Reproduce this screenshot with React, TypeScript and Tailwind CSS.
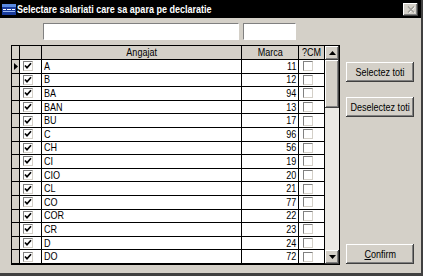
const font = "font-['Liberation_Sans',Arial,sans-serif]";

const rows: [string, number][] = [
  ["A", 11],
  ["B", 12],
  ["BA", 94],
  ["BAN", 13],
  ["BU", 17],
  ["C", 96],
  ["CH", 56],
  ["CI", 19],
  ["CIO", 20],
  ["CL", 21],
  ["CO", 77],
  ["COR", 22],
  ["CR", 23],
  ["D", 24],
  ["DO", 72],
];

// classic raised 3D edge
const raised =
  "bg-[#d4d0c8] shadow-[inset_-1px_-1px_#404040,inset_1px_1px_#ffffff,inset_-2px_-2px_#808080,inset_2px_2px_#d4d0c8]";

// the dialog font is tall and narrow: squeeze Liberation Sans horizontally
function N({ children, o = "c" }: { children: React.ReactNode; o?: "l" | "c" | "r" }) {
  const origin = o === "l" ? "origin-left" : o === "r" ? "origin-right" : "origin-center";
  return <span className={`inline-block whitespace-nowrap scale-x-[0.82] ${origin}`}>{children}</span>;
}

function Box({ checked }: { checked?: boolean }) {
  return (
    <div className="flex h-[10px] w-[10px] items-center justify-center border border-b-[#d4d0c8] border-l-[#808080] border-r-[#d4d0c8] border-t-[#808080] bg-white">
      {checked && (
        <svg width="8" height="8" viewBox="0 0 8 8">
          <path d="M1 3.5 L3 5.8 L7 1.2" fill="none" stroke="#000" strokeWidth="1.7" />
        </svg>
      )}
    </div>
  );
}

function Button({ children, className = "" }: { children: React.ReactNode; className?: string }) {
  return (
    <div className={`flex h-[20px] w-[68px] items-center justify-center text-[11px] leading-none text-black ${raised} ${className}`}>
      {children}
    </div>
  );
}

function Arrow({ up }: { up?: boolean }) {
  return (
    <div className={`flex h-[14px] w-[14px] shrink-0 items-center justify-center ${raised}`}>
      <svg width="7" height="4" viewBox="0 0 7 4">
        <path d={up ? "M3.5 0 L7 4 L0 4 Z" : "M0 0 L7 0 L3.5 4 Z"} fill="#000" />
      </svg>
    </div>
  );
}

export default function App() {
  return (
    <div className={`flex h-[276px] w-[423px] flex-col overflow-hidden bg-[#d4d0c8] ${font} border-b-[3px] border-r-[2px] border-b-[#404040] border-r-[#404040]`}>
      {/* title bar */}
      <div className="flex h-[18px] shrink-0 items-center bg-black pl-[2px] pr-[3px]">
        <svg width="14" height="11" viewBox="0 0 14 11" className="mr-[1px] shrink-0">
          <rect x="0" y="0" width="14" height="11" fill="#1a3c9c" />
          <rect x="0" y="0" width="14" height="3" fill="#5a8ae0" />
          <rect x="1" y="5" width="3" height="1" fill="#fff" />
          <rect x="5" y="5" width="4" height="1" fill="#fff" />
          <rect x="10" y="5" width="3" height="1" fill="#fff" />
          <rect x="1" y="7" width="12" height="1" fill="#9bb8f0" />
        </svg>
        <span className="text-[11px] font-bold text-white">
          <N o="l">Selectare salariati care sa apara pe declaratie</N>
        </span>
        <div className={`ml-auto flex h-[13px] w-[15px] items-center justify-center ${raised}`}>
          <svg width="8" height="7" viewBox="0 0 8 7">
            <path d="M1 0.5 L7 6.5 M7 0.5 L1 6.5" stroke="#ffffff" strokeWidth="1.4" transform="translate(0.6 0.6)" />
            <path d="M1 0.5 L7 6.5 M7 0.5 L1 6.5" stroke="#9c9a94" strokeWidth="1.4" />
          </svg>
        </div>
      </div>

      <div className="flex flex-1 pl-[11px]">
        {/* left: filters + grid */}
        <div className="flex w-[329px] flex-col">
          <div className="mt-[5px] flex h-[17px] gap-[4px] pl-[32px]">
            <div className="w-[196px] border border-b-white border-l-[#808080] border-r-white border-t-[#808080] bg-white" />
            <div className="w-[53px] border border-b-white border-l-[#808080] border-r-white border-t-[#808080] bg-white" />
          </div>

          <div className="mt-[5px] flex h-[220px] border border-black text-[11px] text-black">
            <div className="flex w-[313px] flex-col">
              {/* header */}
              <div className="flex h-[14px] shrink-0 border-b border-black bg-[#d4d0c8]">
                <div className="w-[8px] border-r border-black" />
                <div className="w-[22px] border-r border-black" />
                <div className="flex w-[200px] items-center justify-center border-r border-black leading-none">
                  <N>Angajat</N>
                </div>
                <div className="flex w-[57px] items-center justify-center border-r border-black leading-none">
                  <N>Marca</N>
                </div>
                <div className="flex w-[26px] items-center justify-center border-r border-black leading-none">
                  <N>?CM</N>
                </div>
              </div>
              {rows.map(([name, nr], i) => (
                <div key={name} className="flex h-[13.6px] shrink-0 border-b border-black bg-white">
                  <div className="flex w-[8px] items-center justify-center border-r border-black bg-[#d4d0c8]">
                    {i === 0 && (
                      <svg width="4" height="7" viewBox="0 0 4 7">
                        <path d="M0 0 L4 3.5 L0 7 Z" fill="#000" />
                      </svg>
                    )}
                  </div>
                  <div className="flex w-[22px] items-center border-r border-black pl-[3px]">
                    <Box checked />
                  </div>
                  <div className="flex w-[200px] items-center border-r border-black pl-[2px] leading-none">
                    <N o="l">{name}</N>
                  </div>
                  <div className="flex w-[57px] items-center justify-end border-r border-black pr-[2px] leading-none">
                    <N o="r">{nr}</N>
                  </div>
                  <div className="flex w-[26px] items-center border-r border-black pl-[4px]">
                    <Box />
                  </div>
                </div>
              ))}
            </div>
            {/* scrollbar */}
            <div className="flex w-[14px] flex-col bg-[#ebe9e4]">
              <Arrow up />
              <div className={`h-[48px] w-[14px] shrink-0 ${raised}`} />
              <div className="flex-1" />
              <Arrow />
            </div>
          </div>
        </div>

        {/* right: buttons */}
        <div className="ml-[6px] flex flex-col pb-[9px]">
          <Button className="mt-[44px]">
            <N>Selectez toti</N>
          </Button>
          <Button className="mt-[15px]">
            <N>Deselectez toti</N>
          </Button>
          <Button className="mt-auto">
            <N>
              <span className="underline">C</span>onfirm
            </N>
          </Button>
        </div>
      </div>
    </div>
  );
}
